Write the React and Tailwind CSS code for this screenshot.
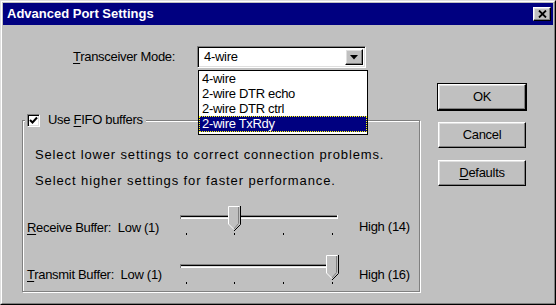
const raised =
  'border border-t-white border-l-white border-r-black border-b-black shadow-[inset_-1px_-1px_0_#808080,inset_1px_1px_0_#dfdfdf]';
const sunken =
  'border border-t-[#808080] border-l-[#808080] border-r-white border-b-white shadow-[inset_1px_1px_0_#000,inset_-1px_-1px_0_#dfdfdf]';

const modes = ['4-wire', '2-wire DTR echo', '2-wire DTR ctrl', '2-wire TxRdy'];

const Slider = ({ pos }) => {
  const ticks = [8, 56, 105, 154];
  const cx = ticks[pos];
  const l = cx - 6;
  const r = cx + 6;
  return (
    <svg width="165" height="32" className="shrink-0">
      {/* channel */}
      <rect x="2" y="11" width="158" height="1" fill="#808080" />
      <rect x="2" y="12" width="158" height="1" fill="#000" />
      <rect x="2" y="13" width="158" height="1" fill="#dfdfdf" />
      <rect x="2" y="14" width="158" height="1" fill="#fff" />
      <rect x="2" y="11" width="1" height="4" fill="#808080" />
      <rect x="159" y="11" width="1" height="4" fill="#fff" />
      {/* thumb */}
      <polygon points={`${l},2 ${r},2 ${r},20 ${cx},26 ${l},20`} fill="#c0c0c0" />
      <polyline points={`${l + 0.5},20 ${l + 0.5},2.5 ${r - 0.5},2.5`} fill="none" stroke="#fff" strokeWidth="1" />
      <polyline points={`${r - 1.5},3 ${r - 1.5},19.5 ${cx},25`} fill="none" stroke="#808080" strokeWidth="1" />
      <polyline points={`${r + 0.5},2 ${r + 0.5},20.5 ${cx},27`} fill="none" stroke="#000" strokeWidth="1" />
      <line x1={l + 0.5} y1="20" x2={cx} y2="25.5" stroke="#fff" strokeWidth="1" />
      {ticks.map((t) => (
        <rect key={t} x={t} y="29" width="1" height="2" fill="#000" />
      ))}
    </svg>
  );
};

const Button = ({ children, isDefault }) => (
  <div className={isDefault ? 'border border-black' : 'm-px'}>
    <button className={`${raised} w-full h-[26px] bg-[#c0c0c0] text-black flex items-center justify-center`}>
      {children}
    </button>
  </div>
);

export default function App() {
  return (
    <div className="w-[556px] h-[305px] bg-[#c0c0c0] border border-t-[#dfdfdf] border-l-[#dfdfdf] border-r-black border-b-black font-['Liberation_Sans',Arial,sans-serif] text-[13px] leading-[16px] tracking-[-0.3px] text-black">
      <div className="h-full border border-t-white border-l-white border-r-[#808080] border-b-[#808080] p-px flex flex-col">
        <div className="h-[22px] bg-[#000080] flex items-center justify-between pl-[4px] pr-[2px]">
          <span className="text-white font-bold tracking-normal">Advanced Port Settings</span>
          <button className={`${raised} w-[18px] h-[14px] bg-[#c0c0c0] flex items-center justify-center`}>
            <svg width="9" height="8" viewBox="0 0 9 8">
              <path d="M1 0.5 L8 7.5 M8 0.5 L1 7.5" stroke="#000" strokeWidth="1.8" />
            </svg>
          </button>
        </div>

        <div className="flex flex-1">
          <div className="w-[417px] shrink-0">
            <div className="flex items-center mt-[21px] ml-[70px] h-[22px]">
              <span className="w-[124px]">
                <span className="underline underline-offset-2">T</span>ransceiver Mode:
              </span>
              <div className="relative">
                <div className={`${sunken} w-[169px] h-[22px] bg-white flex items-center p-[2px]`}>
                  <span className="flex-1 pl-[4px]">4-wire</span>
                  <div className={`${raised} w-[18px] h-full bg-[#c0c0c0] flex items-center justify-center`}>
                    <svg width="8" height="5" viewBox="0 0 8 5">
                      <path d="M0 0 H8 L4 4.5 Z" fill="#000" />
                    </svg>
                  </div>
                </div>
                <div className="absolute z-10 top-[24px] left-[1px] w-[170px] bg-white border border-black pb-[2px]">
                  {modes.map((m, i) => (
                    <div
                      key={m}
                      className={
                        i === 3
                          ? 'h-[16px] pl-[2px] bg-[#000080] text-white border border-dotted border-[#ffff00] leading-[14px]'
                          : 'h-[15px] pl-[3px] leading-[15px]'
                      }
                    >
                      {m}
                    </div>
                  ))}
                </div>
              </div>
            </div>

            <div className="relative mt-[52px] ml-[19px] w-[398px] h-[172px] border border-[#808080] shadow-[inset_1px_1px_0_#fff,1px_1px_0_#fff] pl-[4px]">
              <div className="absolute -top-[9px] left-[2px] h-[16px] bg-[#c0c0c0] flex items-center pl-[2px] pr-[3px]">
                <div className={`${sunken} w-[13px] h-[13px] bg-white flex items-center justify-center`}>
                  <svg width="9" height="9" viewBox="0 0 9 9">
                    <path d="M1 4 L3.5 6.5 L8 1.5" fill="none" stroke="#000" strokeWidth="2" />
                  </svg>
                </div>
                <span className="ml-[8px]">
                  Use <span className="underline underline-offset-2">F</span>IFO buffers
                </span>
              </div>

              <p className="mt-[26px] ml-[8px] tracking-[0.85px]">Select lower settings to correct connection problems.</p>
              <p className="mt-[10px] ml-[8px] tracking-[0.9px]">Select higher settings for faster performance.</p>

              <div className="flex items-start mt-[15px] h-[32px]">
                <span className="w-[151px] mt-[16px] shrink-0">
                  <span className="underline underline-offset-2">R</span>eceive Buffer:&nbsp; Low (1)
                </span>
                <Slider pos={1} />
                <span className="ml-[16px] mt-[15px]">High (14)</span>
              </div>
              <div className="flex items-start mt-[17px] h-[32px]">
                <span className="w-[151px] mt-[14px] shrink-0">
                  <span className="underline underline-offset-2">T</span>ransmit Buffer:&nbsp; Low (1)
                </span>
                <Slider pos={3} />
                <span className="ml-[16px] mt-[14px]">High (16)</span>
              </div>
            </div>
          </div>

          <div className="ml-[17px] w-[90px] pt-[58px] flex flex-col">
            <Button isDefault>OK</Button>
            <div className="mt-[10px]">
              <Button>Cancel</Button>
            </div>
            <div className="mt-[10px]">
              <Button>
                <span>
                  <span className="underline underline-offset-2">D</span>efaults
                </span>
              </Button>
            </div>
          </div>
        </div>
      </div>
    </div>
  );
}
